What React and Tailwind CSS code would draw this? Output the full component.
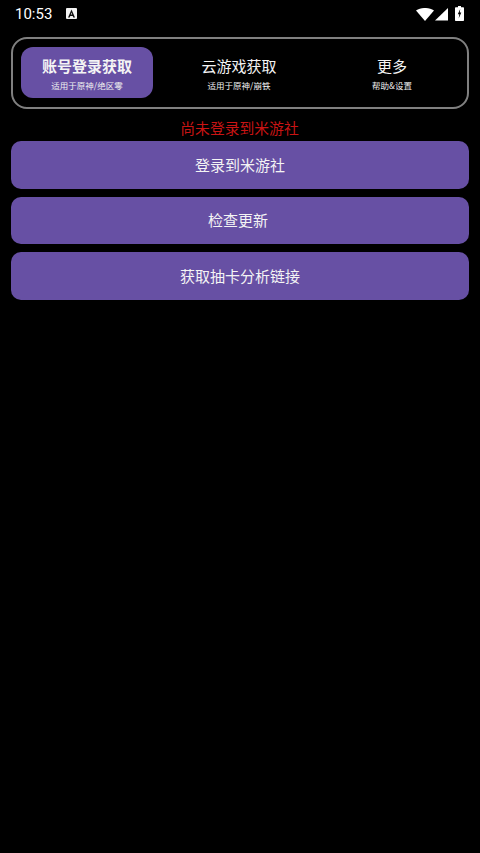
function Tab({ title, sub, active, className }) {
  return (
    <div className={`flex flex-col items-center justify-center h-[51px] ${className} ${active ? "bg-[#6750a4] rounded-[12px]" : ""}`}>
      <div className={`text-[15px] leading-[22px] text-[#f4f4f4] ${active ? "font-bold" : ""}`}>{title}</div>
      <div className="text-[8.5px] leading-[12px] mt-[2px] text-[#f0f0f0]">{sub}</div>
    </div>
  );
}

function Btn({ children, className = "" }) {
  return (
    <div className={`h-[47.5px] rounded-[10px] bg-[#6750a4] flex items-center justify-center text-[15px] text-[#f4f4f4] ${className}`}>
      {children}
    </div>
  );
}

export default function App() {
  return (
    <div className="w-[480px] h-[853px] bg-black overflow-hidden font-['Noto_Sans_CJK_SC','Noto_Sans',sans-serif]">
      <div className="h-[27px] flex items-center pl-[15px] pr-[16px] pt-[1px] text-white">
        <span className="font-['Roboto',sans-serif] text-[15px] leading-none w-[38px]">10:53</span>
        <svg className="ml-[13px] -mt-[2px]" width="11" height="11" viewBox="0 0 11 11">
          <rect width="11" height="11" rx="1" fill="#f4f4f4" />
          <path d="M5.5 1.5 L9 9.5 H7.3 L6.7 8 H4.3 L3.7 9.5 H2 Z" fill="#111" />
          <path d="M5.5 4.4 L6.2 6.4 H4.8 Z" fill="#f4f4f4" />
        </svg>
        <div className="flex-1" />
        <svg width="18" height="13" viewBox="0 0 18 13">
          <path d="M0 2.6 C5 -0.9 13 -0.9 18 2.6 L9 13 Z" fill="#fff" />
        </svg>
        <svg className="ml-[1px]" width="13" height="13" viewBox="0 0 13 13">
          <path d="M13 0 V12.5 H0 Z" fill="#fff" />
        </svg>
        <svg className="ml-[7px] -mt-[1px]" width="9" height="15" viewBox="0 0 9 15">
          <path d="M3 0 H6 V1.2 H8 C8.6 1.2 9 1.6 9 2.2 V14 C9 14.6 8.6 15 8 15 H1 C0.4 15 0 14.6 0 14 V2.2 C0 1.6 0.4 1.2 1 1.2 H3 Z" fill="#fff" />
          <path d="M5.2 3 L2.8 8.2 H4.3 L3.7 12.4 L6.3 6.6 H4.8 Z" fill="#000" />
        </svg>
      </div>
      <div className="px-[10.7px] pt-[10px]">
        <div className="h-[71.5px] border-2 border-[#808080] rounded-[16px] flex items-center px-[8.3px]">
          <Tab title="账号登录获取" sub="适用于原神/绝区零" active className="w-[132px]" />
          <Tab title="云游戏获取" sub="适用于原神/崩铁" className="w-[172px]" />
          <Tab title="更多" sub="帮助&设置" className="flex-1" />
        </div>
        <div className="h-[32.5px] pt-[6px] pr-[1px] flex items-center justify-center text-[14.8px] text-[#c81414]">尚未登录到米游社</div>
        <div className="flex flex-col gap-[8px]">
          <Btn>登录到米游社</Btn>
          <Btn className="pr-[4px]">检查更新</Btn>
          <Btn>获取抽卡分析链接</Btn>
        </div>
      </div>
    </div>
  );
}
